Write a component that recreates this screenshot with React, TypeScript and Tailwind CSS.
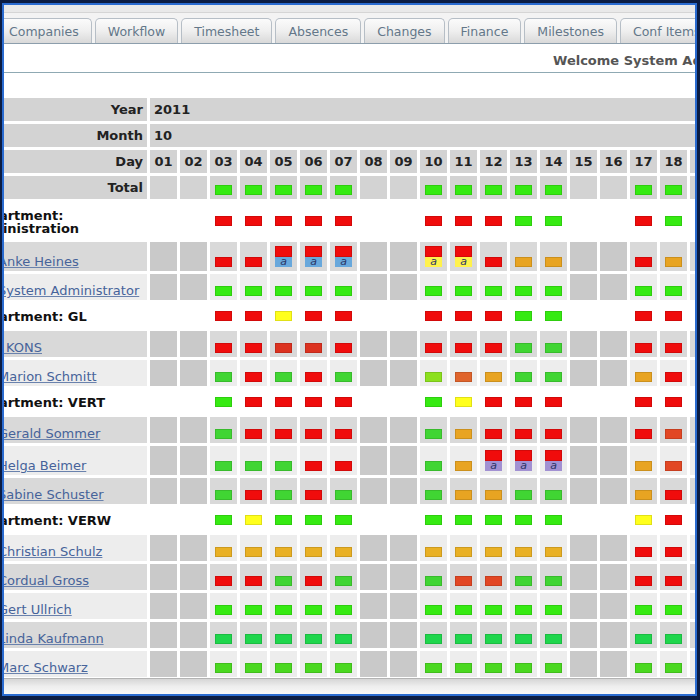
import React from "react";

const tabs = ["Companies", "Workflow", "Timesheet", "Absences", "Changes", "Finance", "Milestones", "Conf Items"];

const days = Array.from({ length: 19 }, (_, i) => String(i + 1).padStart(2, "0"));
const workdays = [2, 3, 4, 5, 6, 9, 10, 11, 12, 13, 16, 17, 18];

const colors: Record<string, string> = {
  G: "bg-[#36ea12]",
  g: "bg-[#40d533]",
  L: "bg-[#1fd64c]",
  M: "bg-[#4ad820]",
  R: "bg-[#f00c0c]",
  r: "bg-[#dc3220]",
  O: "bg-[#e8a422]",
  o: "bg-[#e9b024]",
  D: "bg-[#e0642c]",
  E: "bg-[#e24724]",
  Y: "bg-[#ffff1c]",
  V: "bg-[#8ce01e]",
};

const subColors: Record<string, string> = {
  b: "bg-[#68a8dc]",
  y: "bg-[#fff24c]",
  p: "bg-[#a291d2]",
};

type Row = { label: string; dept?: boolean; tall?: boolean; marks: string };

const rows: Row[] = [
  { label: "Department: Administration", dept: true, tall: true, marks: "R R R R R R R R G G R G G" },
  { label: "Anke Heines", tall: true, marks: "R R R/b R/b R/b R/y R/y R O O R O D" },
  { label: "System Administrator", marks: "G G G G G G G G G G G G G" },
  { label: "Department: GL", dept: true, marks: "R R Y R R R R R G G R R R" },
  { label: "I KONS", marks: "R R r r R R R R g g R R R" },
  { label: "Marion Schmitt", marks: "g R g R g V D O g g O R O" },
  { label: "Department: VERT", dept: true, marks: "G R R R R G Y R R R R R Y" },
  { label: "Gerald Sommer", marks: "g R R R R g O R R R R E O" },
  { label: "Helga Beimer", tall: true, marks: "g g g R R g O R/p R/p R/p O E g" },
  { label: "Sabine Schuster", marks: "g R g R g g O O g g O R O" },
  { label: "Department: VERW", dept: true, marks: "G Y G G G G G G G G Y R G" },
  { label: "Christian Schulz", marks: "o o o o o o o o o o R R D" },
  { label: "Cordual Gross", marks: "R R g R g g E E g g R R R" },
  { label: "Gert Ullrich", marks: "G G G G G G G G G G G G G" },
  { label: "Linda Kaufmann", marks: "L L L L L L L L L L L L L" },
  { label: "Marc Schwarz", marks: "M M M M M M M M M M M M M" },
];

function spread(marks: string) {
  const parts = marks.split(" ");
  const out: string[] = Array(19).fill("");
  workdays.forEach((d, i) => (out[d] = parts[i]));
  return out;
}

const Mark: React.FC<{ code: string }> = ({ code }) => {
  if (!code) return null;
  const [top, sub] = code.split("/");
  return (
    <>
      <span
        className={`block w-[17px] ${sub ? "h-[11px]" : "h-[10px]"} ${colors[top]} shadow-[inset_0_0_0_1px_rgba(0,0,0,0.12)]`}
      />
      {sub && (
        <span
          className={`block w-[17px] h-[10px] ${subColors[sub]} text-[11px] leading-[10px] italic text-center text-[#2b3566]`}
        >
          a
        </span>
      )}
    </>
  );
};

const grid = "grid grid-cols-[180px_repeat(19,27px)] gap-x-[3px]";

export default function App() {
  let person = 0;

  return (
    <div className="w-[700px] h-[700px] bg-[#0b1c42] pt-[3px] pl-[2px] pr-[3px] pb-[4px]">
      <div className="h-full border-2 border-[#2a6bd0] bg-white overflow-hidden">
        <div className="-ml-[37px] w-[900px] h-full flex flex-col font-['DejaVu_Sans',sans-serif] text-[13px]">
          {/* Tabs */}
          <div className="bg-[#f3f3f3]">
            <div className="h-[8px] bg-[#e9e9e9] border-b border-[#d5d5d5]" />
            <div className="flex gap-[3px] pl-[29px] pt-[5px] border-b border-[#8c9eac]">
              {tabs.map((t) => (
                <div
                  key={t}
                  className="h-[25px] px-[12px] pt-[3px] flex items-center rounded-t-[5px] border border-b-0 border-[#b6bec6] bg-linear-to-b from-[#fbfbfb] via-[#efefef] to-[#d9d9d9] text-[12.5px] text-[#637789] whitespace-nowrap"
                >
                  {t}
                </div>
              ))}
            </div>
          </div>

          {/* Welcome */}
          <div className="h-[29px] pl-[586px] pt-[5px] flex items-center border-b border-[#8fa9b3] font-bold text-[#555] whitespace-nowrap">
            Welcome System Administrator
          </div>

          {/* Calendar */}
          <div className="mt-[25px] flex flex-col gap-y-[3px] text-[#222]">
            <div className={`${grid} h-[23px] font-bold`}>
              <div className="bg-[#d3d3d3] flex items-center justify-end pr-[4px]">Year</div>
              <div className="col-span-19 bg-[#d3d3d3] flex items-center pl-[4px]">2011</div>
            </div>
            <div className={`${grid} h-[23px] font-bold`}>
              <div className="bg-[#d3d3d3] flex items-center justify-end pr-[4px]">Month</div>
              <div className="col-span-19 bg-[#d3d3d3] flex items-center pl-[4px]">10</div>
            </div>
            <div className={`${grid} h-[23px] font-bold`}>
              <div className="bg-[#d3d3d3] flex items-center justify-end pr-[4px]">Day</div>
              {days.map((d) => (
                <div key={d} className="bg-[#d3d3d3] flex items-center justify-center">
                  {d}
                </div>
              ))}
            </div>
            <div className={`${grid} h-[23px] font-bold`}>
              <div className="bg-[#d3d3d3] flex items-center justify-end pr-[4px]">Total</div>
              {spread("G G G G G G G G G G G G G").map((m, i) => (
                <div key={i} className="bg-[#d3d3d3] flex flex-col items-center justify-end pb-[4px]">
                  <Mark code={m} />
                </div>
              ))}
            </div>

            {rows.map((row) => {
              const marks = spread(row.marks);
              if (row.dept) {
                return (
                  <div key={row.label} className={`${grid} ${row.tall ? "h-[37px]" : "h-[25px]"}`}>
                    <div className="flex items-center pl-[3px] pt-[2px] font-bold text-[#111] leading-[13px]">{row.label}</div>
                    {marks.map((m, i) => (
                      <div key={i} className="flex flex-col items-center justify-center">
                        <Mark code={m} />
                      </div>
                    ))}
                  </div>
                );
              }
              const dark = person++ % 2 === 0;
              const bg = dark ? "bg-[#d9d9d9]" : "bg-[#ededed]";
              return (
                <div key={row.label} className={`${grid} ${row.tall ? "h-[29px]" : "h-[26px]"}`}>
                  <div className={`${bg} flex items-end pl-[31px] pb-[1px] leading-[16px] whitespace-nowrap`}>
                    <a className="text-[#46639a] underline decoration-[#6a82ad]">{row.label}</a>
                  </div>
                  {marks.map((m, i) => (
                    <div
                      key={i}
                      className={`${m === "" ? "bg-[#c9c9c9]" : bg} flex flex-col items-center justify-end pb-[4px]`}
                    >
                      <Mark code={m} />
                    </div>
                  ))}
                </div>
              );
            })}
          </div>

          <div className="flex-1 mt-[1px] border-t border-[#b3b3b3] bg-linear-to-b from-[#d6d6d6] via-[#eeeeee] to-[#f7f7f7]" />
        </div>
      </div>
    </div>
  );
}
